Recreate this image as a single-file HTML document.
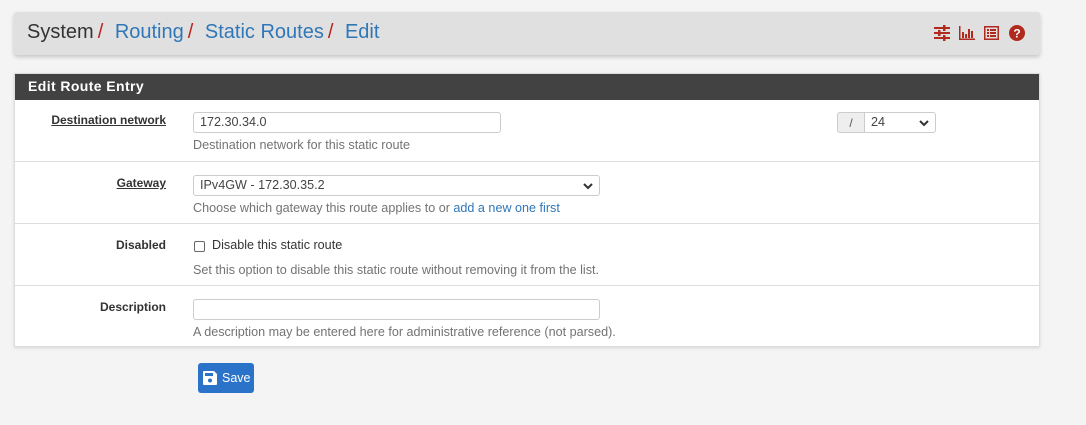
<!DOCTYPE html>
<html><head><meta charset="utf-8"><style>
*{box-sizing:border-box}
body{margin:0;width:1086px;height:425px;background:#f4f4f4;font-family:"Liberation Sans",sans-serif;position:relative;overflow:hidden}
.bc{position:absolute;left:14px;top:12px;width:1026px;height:43px;background:#e0e0e0;border-radius:3px;box-shadow:0 2px 4px rgba(0,0,0,.2)}
.bc .t{position:absolute;left:13px;top:9px;font-size:20px;color:#333;white-space:nowrap}
.bc a{color:#3077b8}
.bc .s{color:#b22;margin:0 6px 0 4px}
.icons{position:absolute;right:14px;top:13px}
.panel{position:absolute;left:14px;top:73px;width:1026px;height:274px;background:#fff;border:1px solid #ddd;box-shadow:0 1px 3px rgba(0,0,0,.12)}
.hd{height:26px;background:#424242;color:#fff;font-size:14px;font-weight:bold;padding:4px 13px;letter-spacing:.4px}
.row{position:absolute;left:0;width:1024px;height:62px;border-top:1px solid #ddd}
.lbl{position:absolute;right:873px;top:14px;font-size:12px;font-weight:bold;color:#333}
.u{text-decoration:underline}
.inp{position:absolute;left:178px;top:13px;height:21px;border:1px solid #ccc;border-radius:3px;background:#fff;font-size:12.6px;color:#444;padding:2px 6px}
.help{position:absolute;left:178px;top:39px;font-size:12.6px;color:#737373;white-space:nowrap}
.help a{color:#3077b8}
.chev{position:absolute;right:6px;top:6px}
.save{position:absolute;left:198px;top:363px;width:56px;height:30px;background:#2a73c9;border-radius:3px;color:#fff;font-size:12.5px}
</style></head><body>
<div class="bc"><div class="t">System<span class="s">/</span> <a>Routing</a><span class="s">/</span> <a>Static Routes</a><span class="s">/</span> <a>Edit</a></div>
<div class="icons"><svg width="92" height="16" viewBox="0 0 92 16"><g fill="#b02a1e">
<rect x="0" y="2" width="16" height="2"/><rect x="0" y="7" width="16" height="2"/><rect x="0" y="12" width="16" height="2"/>
<rect x="9" y="0" width="2.5" height="6"/><rect x="4" y="5" width="2.5" height="6"/><rect x="9" y="10" width="2.5" height="6"/>
<rect x="25" y="1" width="1.5" height="14"/><rect x="25" y="13.5" width="16" height="1.5"/><rect x="28" y="7" width="2" height="6"/><rect x="31" y="9" width="2" height="4"/><rect x="34" y="4" width="2" height="9"/><rect x="37" y="6" width="2" height="7"/>
<path d="M50 1h15v14h-15zM51.5 2.5v11h12v-11z"/><rect x="53" y="4" width="2" height="2"/><rect x="56" y="4" width="6" height="2"/><rect x="53" y="7" width="2" height="2"/><rect x="56" y="7" width="6" height="2"/><rect x="53" y="10" width="2" height="2"/><rect x="56" y="10" width="6" height="2"/>
<circle cx="83" cy="8" r="8"/></g><text x="83" y="12.5" fill="#fff" font-size="12" font-weight="bold" text-anchor="middle" font-family="Liberation Sans">?</text></svg></div></div>
<div class="panel"><div class="hd">Edit Route Entry</div>
<div class="row" style="top:25px;border-top:none"><div class="lbl u">Destination network</div><div class="inp" style="width:308px">172.30.34.0</div><div class="help">Destination network for this static route</div>
<div style="position:absolute;left:822px;top:13px;width:27px;height:21px;background:#eee;border:1px solid #ccc;border-right:none;border-radius:3px 0 0 3px;font-size:12px;color:#555;text-align:center;padding-top:3px">/</div>
<div class="inp" style="left:849px;width:72px;border-radius:0 3px 3px 0">24<svg class="chev" width="10" height="8"><path d="M1 2l4 4 4-4" stroke="#333" stroke-width="2" fill="none"/></svg></div></div>
<div class="row" style="top:87px"><div class="lbl u">Gateway</div><div class="inp" style="width:407px">IPv4GW - 172.30.35.2<svg class="chev" width="10" height="8"><path d="M1 2l4 4 4-4" stroke="#333" stroke-width="2" fill="none"/></svg></div><div class="help">Choose which gateway this route applies to or <a>add a new one first</a></div></div>
<div class="row" style="top:149px"><div class="lbl">Disabled</div><div style="position:absolute;left:179px;top:17px;width:11px;height:11px;border:1px solid #666;border-radius:2px"></div><div style="position:absolute;left:197px;top:14px;font-size:12.6px;color:#333">Disable this static route</div><div class="help">Set this option to disable this static route without removing it from the list.</div></div>
<div class="row" style="top:211px"><div class="lbl">Description</div><div class="inp" style="width:407px"></div><div class="help">A description may be entered here for administrative reference (not parsed).</div></div>
</div>
<div class="save"><svg style="position:absolute;left:5px;top:8px" width="14" height="14" viewBox="0 0 14 14"><path d="M1 0h10l3 3v10a1 1 0 0 1-1 1H1a1 1 0 0 1-1-1V1a1 1 0 0 1 1-1z" fill="#fff"/><rect x="2" y="2" width="8" height="3" fill="#2a73c9"/><circle cx="7" cy="9.5" r="2" fill="#2a73c9"/></svg><span style="position:absolute;left:24px;top:8px">Save</span></div>
</body></html>
